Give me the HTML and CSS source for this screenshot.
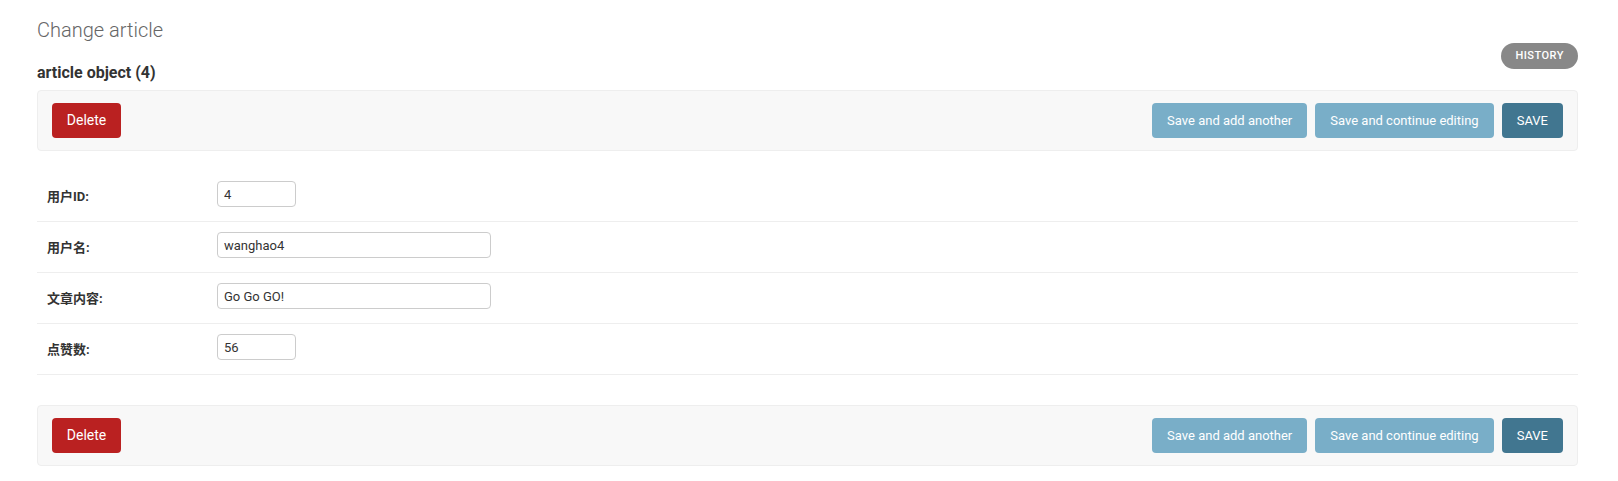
FILE: index.html
```html
<!DOCTYPE html>
<html lang="zh">
<head>
<meta charset="utf-8">
<title>Change article</title>
<link rel="stylesheet" href="styles.css">
</head>
<body>
<div class="content">
  <div class="header">
    <div class="titles">
      <h1 class="title">Change article</h1>
      <h2 class="subtitle">article object (4)</h2>
    </div>
    <a class="history" href="#">History</a>
  </div>

  <div class="submit-row">
    <a class="btn btn-delete" href="#">Delete</a>
    <div class="actions">
      <button class="btn btn-light" type="button">Save and add another</button>
      <button class="btn btn-light" type="button">Save and continue editing</button>
      <button class="btn btn-default" type="button">Save</button>
    </div>
  </div>

  <div class="fieldset">
    <div class="form-row">
      <label class="field-label">用户ID:</label>
      <input class="field-input small" type="text" value="4">
    </div>
    <div class="form-row">
      <label class="field-label">用户名:</label>
      <input class="field-input wide" type="text" value="wanghao4">
    </div>
    <div class="form-row">
      <label class="field-label">文章内容:</label>
      <input class="field-input wide" type="text" value="Go Go GO!">
    </div>
    <div class="form-row">
      <label class="field-label">点赞数:</label>
      <input class="field-input small" type="text" value="56">
    </div>
  </div>

  <div class="submit-row bottom">
    <a class="btn btn-delete" href="#">Delete</a>
    <div class="actions">
      <button class="btn btn-light" type="button">Save and add another</button>
      <button class="btn btn-light" type="button">Save and continue editing</button>
      <button class="btn btn-default" type="button">Save</button>
    </div>
  </div>
</div>
</body>
</html>
```

FILE: styles.css
```css
* { box-sizing: border-box; }

html, body {
  margin: 0;
  padding: 0;
  background: #fff;
}

body {
  font-family: Roboto, "Noto Sans CJK SC", sans-serif;
  font-size: 13px;
  color: #333;
}

.content {
  padding: 18px 40px 0 37px;
}

.header {
  display: flex;
  justify-content: space-between;
  align-items: flex-start;
}

.title {
  margin: 0;
  font-size: 20px;
  line-height: 24px;
  font-weight: 300;
  color: #666;
}

.subtitle {
  margin: 21px 0 0;
  font-size: 16px;
  line-height: 20px;
  font-weight: 700;
  color: #333;
}

.history {
  display: block;
  margin-top: 25px;
  height: 26px;
  line-height: 26px;
  padding: 0 14px 0 14.5px;
  border-radius: 15px;
  background: #888;
  color: #fff;
  font-size: 11px;
  font-weight: 500;
  letter-spacing: 0.5px;
  text-transform: uppercase;
  text-decoration: none;
}

.submit-row {
  margin-top: 7px;
  display: flex;
  justify-content: space-between;
  align-items: center;
  padding: 12px 14px;
  background: #f8f8f8;
  border: 1px solid #eee;
  border-radius: 4px;
}

.submit-row.bottom {
  margin-top: 30px;
}

.actions {
  display: flex;
  gap: 8px;
}

.btn {
  display: block;
  height: 35px;
  line-height: 15px;
  padding: 10px 15px;
  border: none;
  border-radius: 4px;
  font-family: Roboto, sans-serif;
  font-size: 13px;
  font-weight: 400;
  color: #fff;
  text-decoration: none;
  cursor: pointer;
}

.btn-delete {
  background: #ba2121;
  font-size: 14px;
  width: 69px;
  padding: 10px 0;
  text-align: center;
}
.btn-light { background: #79aec8; }
.btn-default { background: #417690; text-transform: uppercase; }

.fieldset {
  margin-top: 20px;
}

.form-row {
  display: flex;
  align-items: center;
  padding: 10px 10px 14px;
  border-bottom: 1px solid #eee;
}

.field-label {
  width: 170px;
  flex: none;
  font-size: 13px;
  font-weight: 700;
  color: #333;
  padding-top: 2px;
}

.field-input {
  height: 26px;
  padding: 5px 6px;
  border: 1px solid #ccc;
  border-radius: 4px;
  font-family: Roboto, sans-serif;
  font-size: 13px;
  color: #333;
  background: #fff;
  margin: 0;
}

.field-input.small { width: 79px; }
.field-input.wide { width: 274px; }
```
